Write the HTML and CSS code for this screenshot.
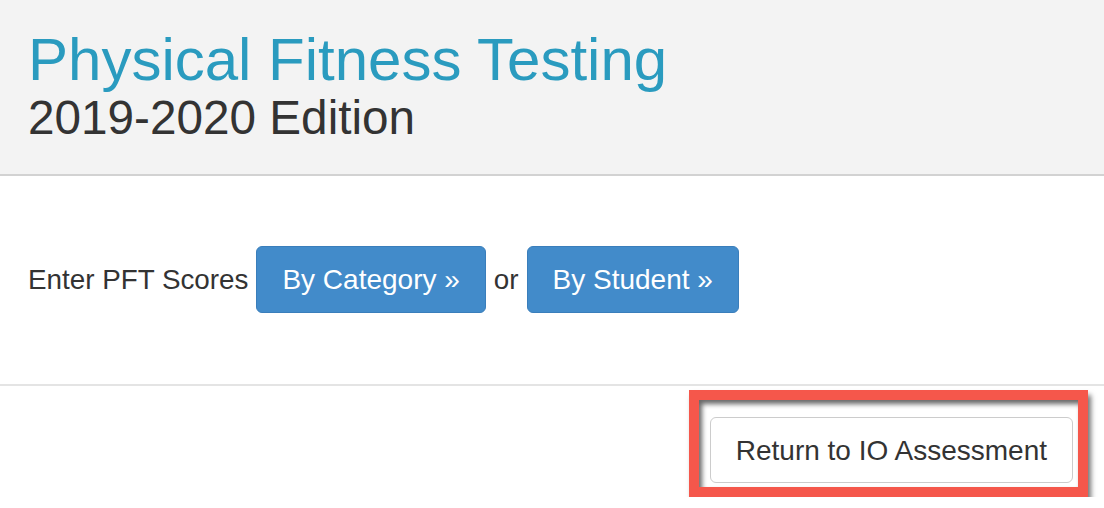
FILE: index.html
```html
<!DOCTYPE html>
<html>
<head>
<meta charset="utf-8">
<link rel="stylesheet" href="styles.css">
</head>
<body>
<header class="header">
  <h1 class="title">Physical Fitness Testing</h1>
  <h2 class="subtitle">2019-2020 Edition</h2>
</header>
<section class="entry">
  <div class="entry-row">
    <span class="label">Enter PFT Scores</span>
    <a class="btn btn-primary">By Category »</a>
    <span class="label">or</span>
    <a class="btn btn-primary">By Student »</a>
  </div>
</section>
<footer class="footer">
  <div class="highlight">
    <a class="btn btn-default">Return to IO Assessment</a>
  </div>
</footer>
</body>
</html>
```

FILE: styles.css
```css
html, body {
  margin: 0;
  padding: 0;
  background: #ffffff;
  font-family: "Liberation Sans", Arial, Helvetica, sans-serif;
  color: #333333;
}

.header {
  background: #f3f3f3;
  border-bottom: 2px solid #d2d2d2;
  padding: 30px 0 33px 28px;
  height: 111px;
}

.title {
  margin: 0;
  font-size: 60px;
  line-height: 59px;
  font-weight: normal;
  color: #2a9bbf;
}

.subtitle {
  margin: 5px 0 0 0;
  font-size: 47.7px;
  line-height: 47.5px;
  font-weight: normal;
  color: #333333;
}

.entry {
  padding: 70px 0 71px 28px;
  border-bottom: 2px solid #e4e4e4;
}

.entry-row {
  display: flex;
  align-items: baseline;
  gap: 8px;
}

.label {
  font-size: 27.8px;
  color: #333333;
}

.btn {
  display: inline-block;
  font-size: 28px;
  line-height: 37px;
  padding: 14px 25px;
  border: 1px solid transparent;
  border-radius: 6px;
  text-decoration: none;
  white-space: nowrap;
}

.btn-primary {
  background: #428bca;
  border-color: #3a7ebb;
  color: #ffffff;
}

.btn-default {
  background: #ffffff;
  border-color: #cccccc;
  color: #333333;
  padding: 14px 25px 13px 25px;
}

.footer {
  display: flex;
  justify-content: flex-end;
  padding: 4px 16px 0 0;
}

.highlight {
  border: 10px solid #f5574b;
  padding: 17px 5px 4px 11px;
  box-shadow: 3px 5px 5px rgba(0, 0, 0, 0.55), inset 3px 4px 5px rgba(0, 0, 0, 0.6);
}
```
